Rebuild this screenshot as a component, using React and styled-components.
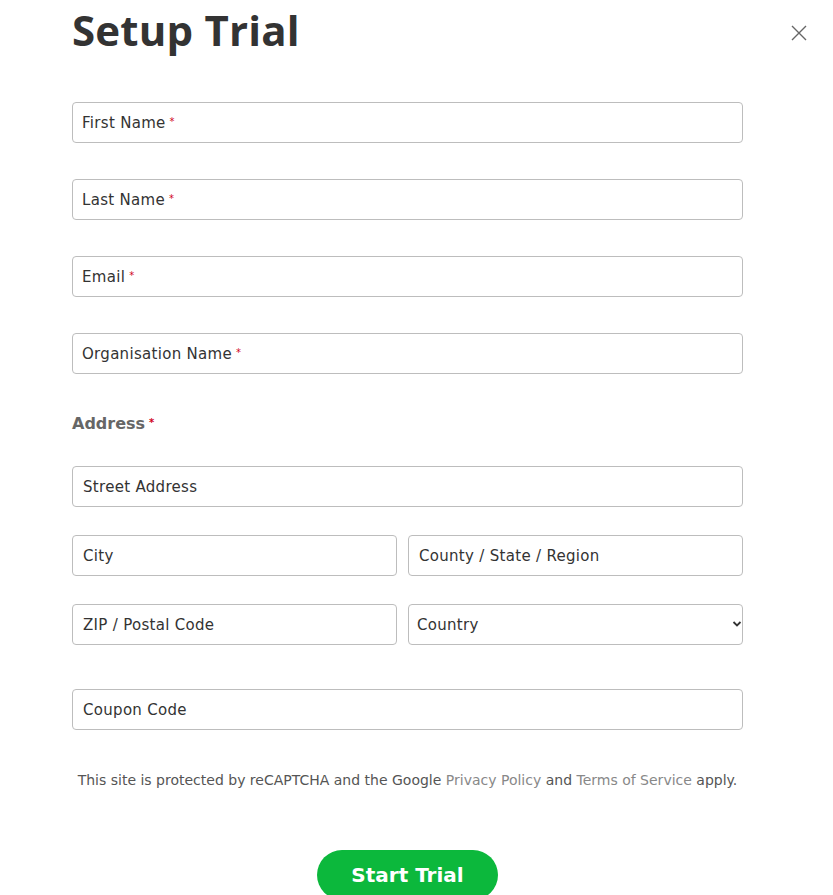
import React from 'react'
import styled, { createGlobalStyle } from 'styled-components'

const GlobalStyle = createGlobalStyle`
  html {
    overflow-y: scroll;
  }
  html, body {
    margin: 0;
    padding: 0;
    background: #fff;
    font-family: "DejaVu Sans", "Open Sans", sans-serif;
  }
  html::-webkit-scrollbar {
    width: 5px;
  }
  html::-webkit-scrollbar-track {
    background: #f4f4f4;
  }
  html::-webkit-scrollbar-thumb {
    background: #8a8a8a;
  }
`

const Modal = styled.div`
  position: relative;
  width: 671px;
  padding: 0 0 60px 72px;
`

const Title = styled.h1`
  margin: 0;
  padding-top: 2px;
  font-family: "Open Sans", sans-serif;
  font-size: 42px;
  line-height: 56px;
  font-weight: 700;
  color: #333;
  letter-spacing: 0.2px;
`

const Close = styled.button`
  position: absolute;
  top: 24px;
  right: -65px;
  width: 18px;
  height: 18px;
  border: 0;
  padding: 0;
  background: none;
  cursor: pointer;
`

const Form = styled.form`
  display: flex;
  flex-direction: column;
  margin-top: 44px;
`

const Fields = styled.div`
  display: flex;
  flex-direction: column;
  gap: 36px;
`

const Field = styled.div`
  position: relative;
  flex: ${(p) => (p.$basis ? `0 0 ${p.$basis}px` : '1')};
`

const Input = styled.input`
  box-sizing: border-box;
  width: 100%;
  height: 41px;
  border: 1px solid #bdbdbd;
  border-radius: 4px;
  padding: 0 10px;
  font-family: inherit;
  font-size: 15px;
  letter-spacing: 0.3px;
  color: #333;
  background: #fff;
  outline: none;
  &::placeholder {
    color: #333;
  }
`

const Hint = styled.span`
  position: absolute;
  left: 10px;
  top: 0;
  height: 41px;
  display: flex;
  align-items: center;
  font-size: 15px;
  letter-spacing: 0.3px;
  color: #333;
  pointer-events: none;
`

const Star = styled.span`
  color: #d0021b;
  font-size: 10px;
  margin-left: 4px;
  position: relative;
  top: -1px;
`

const GroupLabel = styled.div`
  margin-top: 38px;
  font-size: 16px;
  font-weight: 700;
  color: #666;
  display: flex;
  align-items: center;
  height: 22px;
`

const AddressBlock = styled.div`
  display: flex;
  flex-direction: column;
  gap: 28px;
  margin-top: 32px;
`

const Row = styled.div`
  display: flex;
  gap: 11px;
`

const Select = styled.select`
  box-sizing: border-box;
  width: 100%;
  height: 41px;
  border: 1px solid #bdbdbd;
  border-radius: 4px;
  padding: 0 8px;
  font-family: inherit;
  font-size: 15px;
  letter-spacing: 0.3px;
  color: #333;
  background: #fff;
  appearance: none;
  outline: none;
`

const Chevron = styled.svg`
  position: absolute;
  right: 1px;
  top: 16px;
  pointer-events: none;
`

const Coupon = styled.div`
  margin-top: 44px;
`

const Notice = styled.p`
  margin: 40px 0 0;
  text-align: center;
  font-size: 14px;
  line-height: 20px;
  color: #555;
  a {
    color: #888;
    text-decoration: none;
  }
`

const Submit = styled.button`
  align-self: center;
  margin-top: 60px;
  width: 181px;
  height: 50px;
  border: 0;
  border-radius: 25px;
  background: #0cb83c;
  color: #fff;
  font-family: inherit;
  font-size: 20px;
  font-weight: 700;
  cursor: pointer;
`

const required = ['First Name', 'Last Name', 'Email', 'Organisation Name']

const RequiredInput = ({ label }) => (
  <Field>
    <Input aria-label={label} />
    <Hint>
      {label}
      <Star>*</Star>
    </Hint>
  </Field>
)

export default function App() {
  return (
    <>
      <GlobalStyle />
      <Modal>
        <Title>Setup Trial</Title>
        <Close aria-label="Close">
          <svg width="18" height="18" viewBox="0 0 18 18">
            <path d="M2 2L16 16M16 2L2 16" stroke="#666" strokeWidth="1.4" />
          </svg>
        </Close>
        <Form onSubmit={(e) => e.preventDefault()}>
          <Fields>
            {required.map((label) => (
              <RequiredInput key={label} label={label} />
            ))}
          </Fields>
          <GroupLabel>
            Address<Star>*</Star>
          </GroupLabel>
          <AddressBlock>
            <Field>
              <Input placeholder="Street Address" />
            </Field>
            <Row>
              <Field $basis={325}>
                <Input placeholder="City" />
              </Field>
              <Field>
                <Input placeholder="County / State / Region" />
              </Field>
            </Row>
            <Row>
              <Field $basis={325}>
                <Input placeholder="ZIP / Postal Code" />
              </Field>
              <Field>
                <Select defaultValue="">
                  <option value="">Country</option>
                </Select>
                <Chevron width="10" height="8" viewBox="0 0 10 8">
                  <path d="M1.5 2L5 5.5L8.5 2" stroke="#333" strokeWidth="1.8" fill="none" />
                </Chevron>
              </Field>
            </Row>
          </AddressBlock>
          <Coupon>
            <Input placeholder="Coupon Code" />
          </Coupon>
          <Notice>
            This site is protected by reCAPTCHA and the Google <a href="#">Privacy Policy</a> and{' '}
            <a href="#">Terms of Service</a> apply.
          </Notice>
          <Submit type="submit">Start Trial</Submit>
        </Form>
      </Modal>
    </>
  )
}
